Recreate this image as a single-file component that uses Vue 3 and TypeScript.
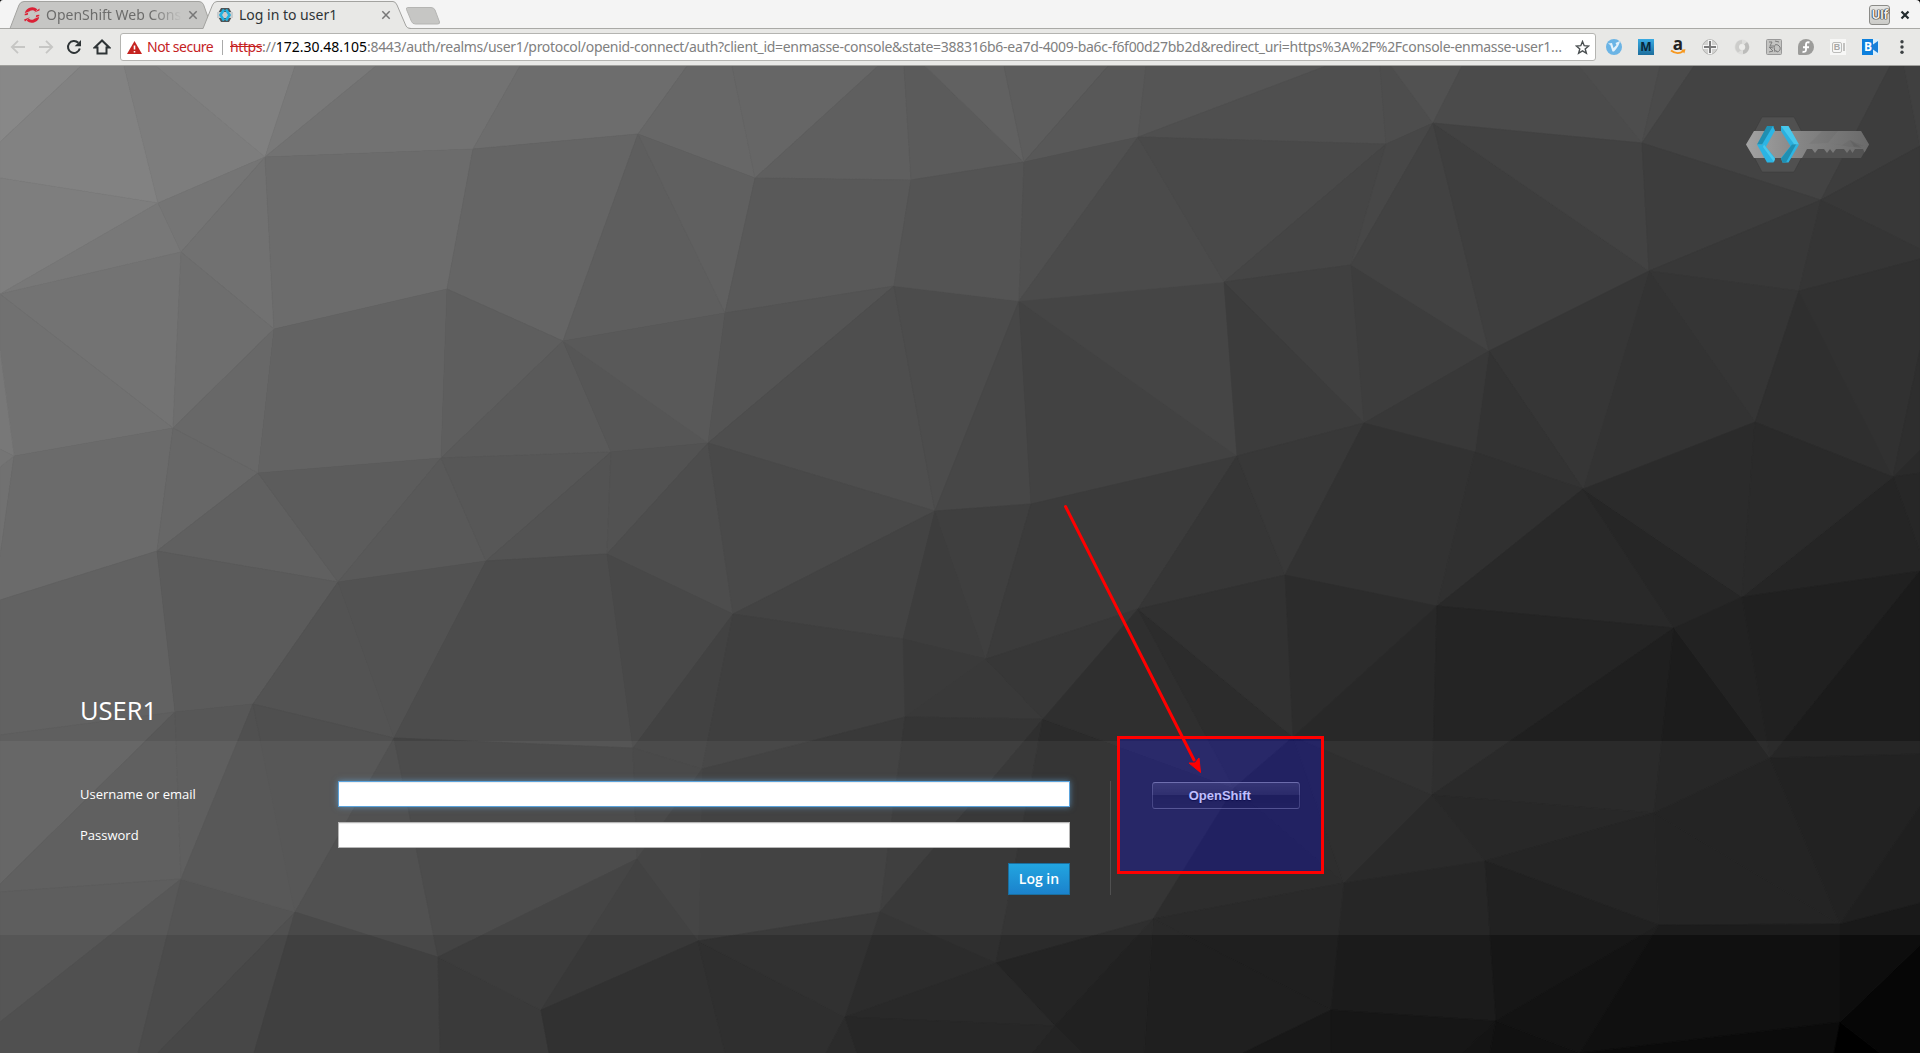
<script setup lang="ts">
type Point = [number, number]

const vertices: Record<string, Point> = {
  t0: [0, 64], t1: [81, 66], t2: [124, 66], t3: [156, 66], t4: [295, 66], t5: [376, 66], t6: [520, 66],
  t7: [687, 66], t8: [732, 66], t9: [878, 66], t10: [904, 66], t11: [925, 66], t12: [1004, 66],
  t13: [1108, 66], t14: [1146, 66], t15: [1326, 66], t16: [1380, 66], t17: [1391, 66], t18: [1462, 66],
  t19: [1579, 66], t20: [1660, 66], t21: [1694, 66], t22: [1890, 66], t23: [1904, 66], t24: [1920, 66],
  l1: [0, 142], l2: [0, 178], l3: [0, 294], l4: [0, 351], l6: [0, 449], l7: [0, 467], l8: [0, 557],
  l9: [0, 600], l10: [0, 735], l11: [0, 884], l12: [0, 892], l13: [0, 1022], l14: [0, 1053],
  r1: [1920, 146], r2: [1920, 249], r3: [1920, 259], r4: [1920, 350], r5: [1920, 450], r6: [1920, 473],
  r7: [1920, 552], r8: [1920, 571], r9: [1920, 754], r10: [1920, 806], r11: [1920, 903], r12: [1920, 945],
  r13: [1920, 1053],
  A1: [158, 203], A2: [265, 157], A3: [181, 252], A5: [274, 329], A6: [473, 149], A7: [447, 289],
  A8: [638, 134], A9: [563, 341],
  B1: [755, 178], B2: [911, 180], B3: [1024, 162], B4: [1138, 137], B5: [725, 313], B6: [894, 286],
  B7: [1019, 301], B8: [1224, 282],
  C1: [1386, 144], C2: [1433, 123], C3: [1642, 143], C4: [1351, 265], C5: [1649, 271], C6: [1821, 200],
  C7: [1799, 291], C8: [1489, 351],
  E1: [14, 456], E2: [173, 428], E3: [258, 473], E4: [441, 458], E5: [611, 452], E6: [708, 443],
  E7: [935, 511], E8: [157, 551], E9: [338, 582], E10: [486, 561], E11: [607, 554], E12: [733, 614],
  E13: [903, 639], E14: [175, 712], E15: [253, 704],
  F0: [1031, 504], F1: [1237, 456], F2: [1364, 423], F3: [1475, 452], F4: [1583, 489], F5: [1755, 422],
  F6: [1893, 477], F7: [1285, 575], F8: [1138, 609], F9: [986, 659], F10: [1437, 606], F11: [1674, 628],
  F12: [1742, 597],
  G1: [1043, 719], G2: [1293, 737], G3: [1234, 788], G4: [1432, 795], G5: [1654, 813], G6: [1770, 758],
  G7: [1344, 883], G8: [1485, 861], G9: [1153, 919], G10: [1659, 925], G11: [1840, 924], G12: [996, 963],
  G13: [1055, 1026], G14: [1331, 1010], G15: [1496, 1021], G16: [1840, 1022],
  H1: [394, 738], H2: [181, 879], H3: [295, 912], H4: [633, 748], H5: [637, 859], H6: [702, 769],
  H7: [698, 941], H8: [880, 912],
  K1: [438, 957], K2: [541, 1010], K3: [845, 1017], u1: [905, 717],
  b1: [138, 1053], b2: [158, 1053], b3: [254, 1053], b4: [440, 1053], b5: [549, 1053], b6: [725, 1053],
  b7: [826, 1053], b8: [857, 1053], b9: [1033, 1053], b10: [1082, 1053], b11: [1144, 1053],
  b12: [1243, 1053], b13: [1331, 1053], b14: [1462, 1053], b15: [1490, 1053], b16: [1580, 1053],
  b17: [1834, 1053], b18: [1880, 1053],
}

const faceList = `
t0 t1 l1 136;l1 t1 t2 A1 l2 130;t2 t3 A2 A1 125;t3 t4 A2 128;t4 t5 A2 121;t5 t6 A6 A2 114;t6 t7 A8 A6 109
l2 A1 l3 126;l3 A1 A3 120;A1 A2 A3 117;A2 A5 A3 113;A2 A6 A7 A5 108;A6 A8 A9 A7 101
t7 t8 B1 A8 103;t8 t9 B1 102;t9 t10 B2 B1 95;t10 t11 B3 B2 91;t11 t12 B3 97;t12 t13 B3 93;t13 t14 B4 B3 88
t14 t15 B4 85;t15 t16 C1 B4 79;t16 t17 C2 C1 77;t17 t18 C2 81;t18 t19 C3 C2 75;t19 t20 C3 77;t20 t21 C3 74
t21 t22 C6 C3 67;t22 t23 r1 C6 61;t23 t24 r1 64
l3 A3 E2 115;l3 E2 E1 l4 113;l4 E1 l6 120;A3 A5 E2 110;A5 E3 E2 104;A5 A7 E4 E3 99;A7 A9 E4 94
A9 E5 E4 90;A9 E6 E5 86;A8 B5 A9 94;A8 B1 B5 96;A9 B5 E6 89;B1 B2 B6 B5 89;B5 B6 E6 84;B6 E7 E6 78
B6 B7 E7 76;B7 F0 E7 71;B7 F1 F0 66;B7 B8 F1 69;B2 B3 B7 B6 84;B3 B4 B7 80;B4 B8 B7 75;B4 C1 B8 73
C1 C4 B8 69;C1 C2 C4 71;B8 C4 F2 64;B8 F2 F1 60;C4 C8 F2 61;C2 C8 C4 66;C2 C5 C8 62;C2 C3 C5 66
C3 C6 C5 61;C6 C7 C5 56;C6 r1 r2 56;C6 r2 r3 C7 53;C5 C7 F5 53;C5 F5 F4 51;C8 C5 F4 54;C8 F4 F3 51
C8 F3 F2 56;C7 F6 F5 47;C7 r3 r4 F6 49;F6 r4 r5 46;F6 r5 r6 42;F6 r6 r7 39;F6 r7 r8 F12 37
l7 E1 l8 113;l6 E1 l7 117;E1 E2 E8 l9 l8 107;E2 E3 E8 103;E3 E9 E8 96;E3 E4 E9 92;E4 E10 E9 89
E4 E5 E10 87;E5 E11 E10 83;E5 E6 E11 82;E6 E12 E11 77;E6 E7 E12 73;E7 E13 E12 67;E7 F9 E13 61
E7 F0 F9 63;F0 F1 F8 F9 59;F1 F7 F8 54;F1 F2 F7 56;F2 F3 F10 F7 50;F3 F4 F10 48;F4 F11 F10 41
F4 F12 F11 38;F4 F5 F12 43;F5 F6 F12 42
l9 E8 E14 l10 98;E8 E9 E15 E14 91;E9 H1 E15 83;E9 E10 H1 82;E10 E11 H4 H1 76;E11 E12 H4 72;E12 H6 H4 66
E12 E13 u1 H6 63;E13 F9 u1 58;F9 G1 u1 57;F9 F8 G1 55;H6 u1 H8 H7 57;u1 G1 H8 53;G1 G12 H8 47
G1 G3 G9 G12 43;F8 G3 G1 47;F8 G2 G3 44;F8 F7 G2 49;F7 F10 G2 44;F10 G4 G2 40;F10 F11 G4 36
F11 G5 G4 31;F11 G6 G5 28;F11 F12 G6 34;F12 r8 G6 32;G6 r8 r9 27;G2 G7 G3 35;G3 G7 G9 34;G2 G4 G7 36
G4 G8 G7 31;G4 G5 G8 29;G5 G10 G8 26;G5 G11 G10 25;G5 G6 G11 25;G6 r9 r10 G11 23;G11 r10 r11 20
G7 G14 G9 31;G7 G8 G15 G14 27;G8 G10 G15 22;G9 G14 b12 b11 31;G9 G13 G12 36;G9 b11 b10 G13 33
G14 b12 b13 24;G14 b13 b14 G15 22;G15 b14 b15 20;G15 b15 b16 17;G15 G10 b16 19;G10 G11 G16 b16 16
G16 b16 b17 11;G16 b17 b18 0;G16 b18 r13 r12 6;G11 r11 r12 G16 13
l10 E14 l11 95;E14 H2 l12 l11 88;E14 E15 H2 87;l12 H2 l13 86;l13 H2 b1 l14 80;H2 H3 b2 b1 75
E15 H3 H2 80;E15 H1 H3 79;H1 K1 H3 72;H1 H4 H5 K1 67;H4 H6 H5 65;H6 H5 H7 60
H3 b3 b2 71;H3 K1 b4 b3 64;K1 K2 b5 b4 58;K1 H5 K2 60;H5 H7 K2 56;H7 K2 b5 b6 49;H7 K3 b7 b6 47
H7 H8 K3 49;H8 G12 K3 44;G12 G13 K3 41;K3 b7 b8 43;K3 G13 b9 b8 39;G13 b9 b10 36`

const faces = faceList
  .trim()
  .split(/[;\n]/)
  .map((entry) => {
    const parts = entry.trim().split(' ')
    const grey = parts.pop()
    return {
      points: parts.map((name) => vertices[name].join(',')).join(' '),
      color: `rgb(${grey},${grey},${grey})`,
    }
  })
</script>

<template>
  <div class="window">
    <header class="strip">
      <svg class="strip-shapes" width="1920" height="29" viewBox="0 0 1920 29">
        <path d="M0 28.5H1920" stroke="#a9a9a6" />
        <path d="M10 28.5 19 5Q20.5 1.5 24 1.5H199Q202 1.5 203.500 4.500L212 28.500Z" fill="#c6c6c4" stroke="#a3a3a0" />
        <path d="M203 29 212.500 5Q214 1.500 217 1.500H393Q395.500 1.500 397 5L405.500 25Q407 28.500 411 29Z" fill="#e8e8e6" />
        <path d="M203 28.500 212.500 5Q214 1.500 217 1.500H393Q395.500 1.500 397 5L406 26Q407 28.500 411 28.500" fill="none" stroke="#a3a3a0" />
        <path d="M407.500 7.500H431Q434 7.500 435 10L439.500 22Q440 24 437.500 24H415.500Q412.500 24 411.500 21.500L406.500 9.500Q406 7.500 407.500 7.500Z" fill="#c6c6c4" stroke="#b5b5b3" />
        <path d="M0 0H3Q0 0 0 3ZM1920 0H1916Q1920 0 1920 4Z" fill="#000" />
      </svg>
      <div class="tab tab-inactive">
        <svg class="favicon" width="16" height="16" viewBox="0 0 16 16">
          <path d="M2.200 8.200A6 6 0 0 1 12.300 3.400M13.800 7.800A6 6 0 0 1 3.700 12.600" fill="none" stroke="#db2136" stroke-width="3" />
          <path d="M0 6.800 5 5M.5 9.800 5.500 8M10.500 8 15.500 6.200M11 11 16 9.200" stroke="#c6c6c4" stroke-width=".8" />
          <path d="M10 5.500 15.500 3.500V1.500ZM0 12.500 6 10.300 1 14.500Z" fill="#db2136" />
        </svg>
        <span class="tab-title">OpenShift Web Cons</span>
        <svg class="close" width="10" height="10" viewBox="0 0 10 10"><path d="M1.300 1.300 8.700 8.700M8.700 1.300 1.300 8.700" stroke="#777" stroke-width="1.500" /></svg>
      </div>
      <div class="tab tab-active">
        <svg class="favicon" width="16" height="16" viewBox="0 0 16 16">
          <path d="M4 1H12L16 8 12 15H4L0 8Z" fill="#4f5355" />
          <path d="M0 5H16V11H0Z" fill="#c9cccd" />
          <path d="M7 2.500 3.500 8 7 13.500M9 2.500 12.500 8 9 13.500" fill="none" stroke="#22b1e0" stroke-width="2.600" />
        </svg>
        <span class="tab-title">Log in to user1</span>
        <svg class="close" width="10" height="10" viewBox="0 0 10 10"><path d="M1.300 1.300 8.700 8.700M8.700 1.300 1.300 8.700" stroke="#777" stroke-width="1.500" /></svg>
      </div>
      <div class="profile">UIf</div>
      <svg class="win-close" width="10" height="10" viewBox="0 0 10 10"><path d="M1.500 1.500 8.500 8.500M8.500 1.500 1.500 8.500" stroke="#222b2e" stroke-width="2.200" /></svg>
    </header>

    <div class="toolbar">
      <nav class="nav">
        <svg width="16" height="16" viewBox="0 0 16 16"><path d="M15 8H2.500M8 1.800 1.800 8 8 14.200" fill="none" stroke="#c6c6c4" stroke-width="1.800" /></svg>
        <svg width="16" height="16" viewBox="0 0 16 16"><path d="M1 8H13.500M8 1.800 14.200 8 8 14.200" fill="none" stroke="#c6c6c4" stroke-width="1.800" /></svg>
        <svg width="16" height="16" viewBox="0 0 16 16"><path d="M13.800 9.500A6 6 0 1 1 12.300 3.800" fill="none" stroke="#2e3436" stroke-width="2" /><path d="M15 1V7.300H8.700Z" fill="#2e3436" /></svg>
        <svg width="18" height="16" viewBox="0 0 18 16"><path d="M9 1.500 1.800 8.500H4.500V14.500H13.500V8.500H16.200Z" fill="none" stroke="#2e3436" stroke-width="2" /></svg>
      </nav>
      <div class="omnibox">
        <svg class="warn" width="15" height="13" viewBox="0 0 15 13"><path d="M7.500 0 15 13H0Z" fill="#c5221f" /><path d="M7.500 4.500V8.500M7.500 10V11.600" stroke="#fff" stroke-width="1.600" /></svg>
        <span class="insecure">Not secure</span>
        <i class="rule"></i>
        <span class="scheme">https</span><span class="sep">://</span><span class="host">172.30.48.105</span><span class="path">:8443/auth/realms/user1/protocol/openid-connect/auth?client_id=enmasse-console&amp;state=388316b6-ea7d-4009-ba6c-f6f00d27bb2d&amp;redirect_uri=https%3A%2F%2Fconsole-enmasse-user1…</span>
        <svg class="star" width="15" height="15" viewBox="0 0 15 15"><path d="M7.500 1.500 9.200 5.700 13.700 6 10.200 8.900 11.400 13.300 7.500 10.900 3.600 13.300 4.800 8.900 1.300 6 5.800 5.700Z" fill="none" stroke="#4a4f51" stroke-width="1.400" /></svg>
      </div>
      <div class="extensions">
        <svg width="16" height="16" viewBox="0 0 16 16"><circle cx="8" cy="8" r="8" fill="#6bb4e5" /><path d="M2 4.500 6 4 7.500 9 10.500 6 9.500 4 14 2Q13.500 6.500 8 12.500H6.500L4.300 6Z" fill="#e3f1fb" /></svg>
        <span class="badge badge-m">M</span>
        <span class="badge badge-a">a<svg width="16" height="6" viewBox="0 0 16 6"><path d="M1 1.500Q7.500 6.500 13.500 2" fill="none" stroke="#f7981f" stroke-width="1.900" /><path d="M11 .8 15.500.3 14.300 4.500Z" fill="#f7981f" /></svg></span>
        <svg width="16" height="16" viewBox="0 0 16 16"><circle cx="8" cy="8" r="7.300" fill="#d2d2d0" stroke="#b4b4b2" /><path d="M8 1V15M1 8H15" stroke="#f4f4f4" stroke-width="4" /><path d="M8 2V14M2 8H14" stroke="#7b7b7b" stroke-width="2" /></svg>
        <svg width="16" height="16" viewBox="0 0 16 16"><circle cx="8" cy="8" r="7.500" fill="#dededc" /><path d="M8 1A7 7 0 0 0 4 13.500L7.500 11A3.500 3.500 0 0 1 8 4.500Z" fill="#cdcdcb" /><path d="M9 15A7 7 0 0 0 13 3L10 5.500A3.500 3.500 0 0 1 9 11.500Z" fill="#bcbcba" /><circle cx="8" cy="8" r="3" fill="#ececea" /></svg>
        <svg width="16" height="16" viewBox="0 0 16 16"><rect x=".5" y=".5" width="15" height="15" rx="1" fill="#c4c4c2" stroke="#999" /><path d="M3 3H6L4 7H8M7 9 3 8 7 12 3 13M9 13 8 8Q9 4 12 6L14 8Q15 12 11 13L9.500 11M9 2 13 3" fill="none" stroke="#7c7c7c" stroke-width="1" /></svg>
        <svg width="16" height="16" viewBox="0 0 16 16"><path d="M8 0A8 8 0 0 1 8 16H1.500Q0 16 0 14.500V8A8 8 0 0 1 8 0Z" fill="#9c9c9a" /><path d="M11.500 3.500Q8 2.500 8 5.500V10.500Q8 13.500 4.500 12.700M5 8.200H11" fill="none" stroke="#fff" stroke-width="1.900" /></svg>
        <span class="badge badge-g"><b>B</b><i></i></span>
        <span class="badge badge-b">B<svg width="5" height="12" viewBox="0 0 5 12"><path d="M0 3.500 5 0V12L0 8.500Z" fill="#1a7fd8" /></svg></span>
        <svg width="16" height="16" viewBox="0 0 16 16"><g fill="#3c4143"><circle cx="8" cy="2.700" r="1.700" /><circle cx="8" cy="8" r="1.700" /><circle cx="8" cy="13.300" r="1.700" /></g></svg>
      </div>
    </div>

    <main class="page">
      <svg class="mesh" width="1920" height="987" viewBox="0 66 1920 987">
        <polygon v-for="(face, i) in faces" :key="i" :points="face.points" :fill="face.color" :stroke="face.color" stroke-width=".6" />
      </svg>

      <div class="brand">
        <svg width="124" height="57" viewBox="0 0 124 57">
          <path d="M16 1H48L62.500 28.500 48 56H16L1.500 28.500Z" fill="#505050" stroke="#3a3a3a" stroke-opacity=".5" />
          <path d="M8 15H115L123 28.500 115 42H8L0 28.500Z" fill="#525252" />
          <linearGradient id="shaft" x1="0" x2="1"><stop offset="0" stop-color="#a3a3a3" /><stop offset=".45" stop-color="#858585" /><stop offset="1" stop-color="#6a6a6a" /></linearGradient>
          <path d="M8 15H115L123 28.500 118.500 36.500 117 33H109L106.500 37 104 33 101 37 98 33H90L87 37 84 33 81 37 78 33H72L69 37 66 33H61L56 42H8L0 28.500Z" fill="url(#shaft)" />
          <path d="M63 28 82 27 92 15H76ZM82 27 96 29 104 24 118 30 104 31Z" fill="#000" opacity=".04" />
          <path d="M104 24 116 32 108 31Z" fill="#000" opacity=".07" />
          <path d="M21 10H28L17.500 28.500H11Z" fill="#1f8fb2" />
          <path d="M27 10 29 14.500 19 32.500 16 28.500Z" fill="#2cb5e4" />
          <path d="M11 28.500H18L29 42 27.500 46.500H21Z" fill="#2bb4e3" />
          <path d="M18 28.500 29 43 28 46 17 31Z" fill="#48c8ed" />
          <path d="M35 10H42.500L53 28.500H46L35 14Z" fill="#48c8ed" />
          <path d="M35 10V15L45 31 48 28Z" fill="#2bb0de" />
          <path d="M53 28.500H46L35 42 36.500 46.500H42.500Z" fill="#2cb5e4" />
          <path d="M46 28.500H50L40 46.500H36.500L35 42.500Z" fill="#1f8fb2" />
        </svg>
      </div>

      <h1 class="realm">USER1</h1>

      <section class="panel">
        <form class="form" @submit.prevent>
          <label for="username">Username or email</label>
          <input id="username" class="field field-focus" type="text" />
          <label for="password">Password</label>
          <input id="password" class="field" type="password" />
          <button class="login" type="button">Log in</button>
        </form>
        <div class="social">
          <button class="provider" type="button">OpenShift</button>
        </div>
      </section>

      <div class="highlight"></div>
      <svg class="arrow" width="150" height="280" viewBox="0 0 150 280">
        <path d="M5.500 6.500 134 260" stroke="#f00" stroke-width="3" stroke-linecap="round" />
        <path d="M140.500 272.500 129 263 135 263 139 258Z" fill="#f00" stroke="#f00" stroke-width="1" />
      </svg>
    </main>
  </div>
</template>

<style>
body {
  margin: 0;
}
</style>

<style scoped>
.window {
  display: flex;
  flex-direction: column;
  width: 1920px;
  height: 1053px;
  overflow: hidden;
  font-family: "Open Sans", "Noto Sans", sans-serif;
}
.strip {
  position: relative;
  display: flex;
  align-items: center;
  height: 29px;
  flex: none;
  background: #f4f4f4;
  font: 14px "Noto Sans", sans-serif;
}
.strip-shapes {
  position: absolute;
  top: 0;
  left: 0;
}
.tab {
  position: relative;
  display: flex;
  align-items: center;
  height: 29px;
  margin-top: 1px;
}
.favicon {
  flex: none;
}
.tab-inactive {
  width: 174px;
  margin-left: 24px;
  color: #6c6c6b;
}
.tab-active {
  width: 174px;
  margin-left: 19px;
  color: #2e3436;
}
.tab-title {
  flex: 1;
  margin-left: 6px;
  overflow: hidden;
  white-space: nowrap;
  line-height: 20px;
}
.tab-inactive .tab-title {
  flex: none;
  width: 136px;
  mask-image: linear-gradient(to right, #000 105px, transparent 136px);
}
.tab-inactive .close {
  margin-left: 6px;
}
.close {
  flex: none;
}
.profile {
  position: relative;
  box-sizing: border-box;
  width: 21px;
  height: 20px;
  margin-left: auto;
  border: 1px solid #8b8b88;
  border-radius: 3px;
  background: linear-gradient(#e6e6e4, #cbcbc8);
  color: #eee;
  font: bold 12px/18px "Open Sans", sans-serif;
  letter-spacing: -0.5px;
  text-align: center;
  text-shadow: 0 0 1px #222, 0 0 1px #222, 0 0 1px #222, 0 0 1px #222;
}
.win-close {
  position: relative;
  margin: 0 10px;
}
.toolbar {
  display: flex;
  align-items: center;
  box-sizing: border-box;
  height: 37px;
  flex: none;
  border-bottom: 1px solid #a0a09d;
  background: #e8e8e6;
}
.nav {
  display: flex;
  gap: 12px;
  margin-left: 10px;
}
.nav svg:last-child {
  margin-left: -1px;
}
.omnibox {
  display: flex;
  align-items: center;
  box-sizing: border-box;
  width: 1476px;
  height: 28px;
  margin-left: 9px;
  border: 1px solid #b4b4b1;
  border-radius: 3px;
  background: #fff;
  color: #808080;
  font: 14px/26px "Noto Sans", sans-serif;
  white-space: nowrap;
}
.warn {
  margin-left: 6px;
}
.insecure {
  width: 69px;
  margin-left: 5px;
  color: #c5221f;
  letter-spacing: -0.5px;
}
.rule {
  width: 1px;
  height: 15px;
  margin: 0 7px 0 6px;
  background: #aaa;
}
.scheme {
  color: #c5221f;
  text-decoration: line-through;
  letter-spacing: -0.4px;
}
.sep {
  letter-spacing: -0.2px;
}
.host {
  color: #000;
}
.path {
  letter-spacing: -0.3px;
}
.star {
  margin-left: auto;
  margin-right: 5px;
}
.extensions {
  display: flex;
  gap: 16px;
  margin-left: 10px;
}
.badge {
  position: relative;
  box-sizing: border-box;
  width: 16px;
  height: 16px;
  text-align: center;
}
.badge-m {
  background: linear-gradient(#39abe3, #1d6e9d);
  color: #08283a;
  font: bold 12px/16px "Open Sans", sans-serif;
}
.badge-a {
  color: #222;
  font: bold 17px/10px "Open Sans", sans-serif;
}
.badge-a svg {
  position: absolute;
  bottom: 0;
  left: 0;
}
.badge-g {
  display: flex;
  align-items: center;
  gap: 1px;
  padding-left: 2px;
  background: #f7f7f6;
}
.badge-g b {
  box-sizing: border-box;
  width: 10px;
  height: 11px;
  border: 1px solid #bcbcba;
  border-radius: 2px;
  color: #a8a8a6;
  font: bold 9px/9px "Liberation Sans", sans-serif;
}
.badge-g i {
  width: 2px;
  height: 8px;
  background: #c2c2c0;
}
.badge-b {
  display: flex;
  align-items: center;
  width: 17px;
  margin-right: -1px;
  background: linear-gradient(90deg, #0d80dd 11px, #dceefa 11px);
  color: #fff;
  font: bold 12px/16px "Open Sans", sans-serif;
  padding-left: 2px;
}
.badge-b svg {
  margin-left: 1px;
}
.page {
  position: relative;
  display: flex;
  flex-direction: column;
  height: 987px;
  flex: none;
  background: #444;
}
.mesh {
  position: absolute;
  top: 0;
  left: 0;
}
.brand {
  position: relative;
  display: flex;
  justify-content: flex-end;
  height: 57px;
  margin: 50px 50px 0 0;
}
.realm {
  position: relative;
  margin: 515px 0 0 80px;
  height: 53px;
  color: #fff;
  font: 400 25.5px/44px "Open Sans", sans-serif;
  letter-spacing: 0;
}
.panel {
  position: relative;
  display: flex;
  box-sizing: border-box;
  height: 194px;
  padding: 40px 80px;
  background: rgba(255, 255, 255, 0.05);
}
.form {
  display: grid;
  grid-template-columns: 258px 732px;
  grid-template-rows: 26px 26px 32px;
  row-gap: 15px;
  align-items: center;
  margin-right: 40px;
}
.form label {
  color: #fff;
  font-size: 13px;
  line-height: 20px;
}
.field {
  box-sizing: border-box;
  width: 732px;
  height: 26px;
  margin: 0;
  border: 1px solid #b6b6b6;
  outline: none;
  background: #fff;
  box-shadow: inset 0 1px 1px rgba(0, 0, 0, 0.075);
}
.field-focus {
  border-color: #5ba3dc;
  box-shadow: inset 0 1px 1px rgba(0, 0, 0, 0.075), 0 0 6px rgba(102, 175, 233, 0.6);
}
.login {
  grid-column: 2;
  justify-self: end;
  box-sizing: border-box;
  width: 62px;
  height: 32px;
  padding: 0;
  border: 1px solid #1a6f9f;
  background: linear-gradient(#22a5e0, #1b82cc);
  color: #fff;
  font: 600 14px/28px "Open Sans", sans-serif;
}
.social {
  height: 114px;
  border-left: 1px solid #505050;
  padding-left: 41px;
}
.provider {
  box-sizing: border-box;
  width: 148px;
  height: 27px;
  margin-top: 1px;
  padding: 0 12.5px 0 0;
  border: 1px solid rgba(255, 255, 255, 0.22);
  border-top-color: rgba(255, 255, 255, 0.48);
  border-radius: 3px;
  background: linear-gradient(rgba(255, 255, 255, 0.12), rgba(255, 255, 255, 0.05) 50%, rgba(0, 0, 0, 0.12) 50%, rgba(0, 0, 0, 0.03));
  box-shadow: 0 0 1px rgba(0, 0, 0, 0.6);
  color: #fff;
  font: bold 13px/24px "Liberation Sans", Arial, sans-serif;
  text-shadow: 0 1px 1px rgba(0, 0, 0, 0.6);
}
.highlight {
  position: absolute;
  left: 1117px;
  top: 670px;
  box-sizing: border-box;
  width: 207px;
  height: 138px;
  border: 3px solid #f00;
  background: rgba(0, 0, 255, 0.25);
}
.arrow {
  position: absolute;
  left: 1060px;
  top: 434px;
}
</style>
